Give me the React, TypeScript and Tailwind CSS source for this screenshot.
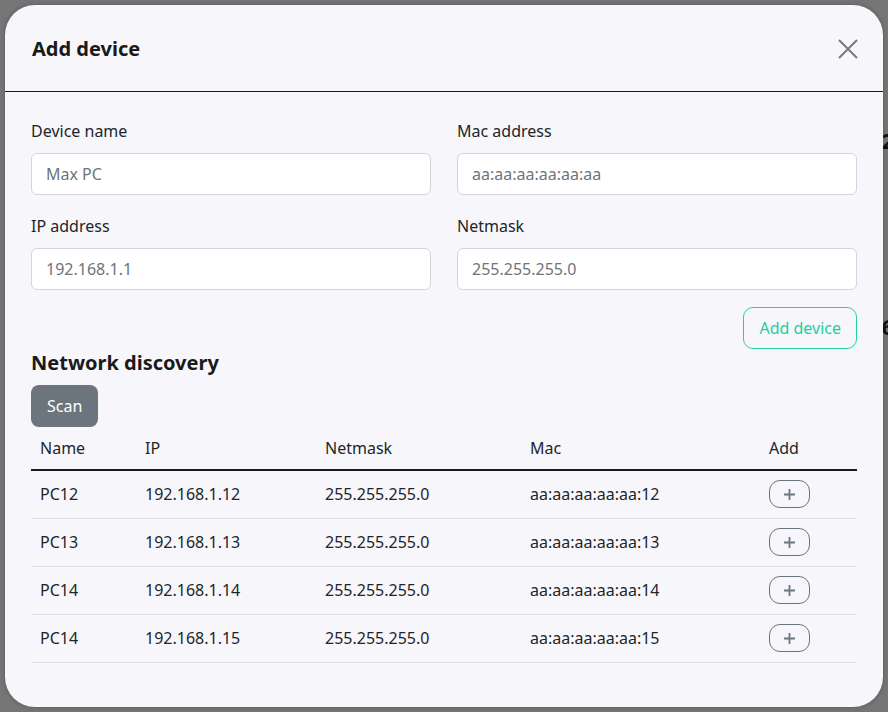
import React from 'react';

type Device = { name: string; ip: string; netmask: string; mac: string };

const DISCOVERED: Device[] = [
  { name: 'PC12', ip: '192.168.1.12', netmask: '255.255.255.0', mac: 'aa:aa:aa:aa:aa:12' },
  { name: 'PC13', ip: '192.168.1.13', netmask: '255.255.255.0', mac: 'aa:aa:aa:aa:aa:13' },
  { name: 'PC14', ip: '192.168.1.14', netmask: '255.255.255.0', mac: 'aa:aa:aa:aa:aa:14' },
  { name: 'PC14', ip: '192.168.1.15', netmask: '255.255.255.0', mac: 'aa:aa:aa:aa:aa:15' },
];

function Field({ label, placeholder }: { label: string; placeholder: string }) {
  return (
    <div className="flex flex-col">
      <label className="text-[16px] leading-6 text-[#212529] mb-[10px]">{label}</label>
      <input
        placeholder={placeholder}
        className="h-[42px] w-full rounded-[6px] border border-[#d4d6db] bg-white px-[14px] text-[16px] text-[#212529] placeholder:text-[#6c757d] outline-none"
      />
    </div>
  );
}

function PlusButton() {
  return (
    <button className="flex h-[28px] w-[41px] items-center justify-center rounded-[11px] border border-[#6c757d] bg-transparent">
      <svg width="13" height="13" viewBox="0 0 13 13" fill="none">
        <path d="M6.5 1v11M1 6.5h11" stroke="#6c757d" strokeWidth="1.8" />
      </svg>
    </button>
  );
}

export default function App() {
  return (
    <div
      className="relative flex h-[712px] w-full items-center justify-center overflow-hidden bg-[#777777]"
      style={{ fontFamily: '"Noto Sans", "Open Sans", sans-serif' }}
    >
      {/* dimmed page behind the dialog */}
      <div className="absolute right-[-6px] top-[124px] text-[22px] font-bold text-[#111]">2</div>
      <div className="absolute right-[-6px] top-[310px] text-[22px] font-bold text-[#111]">6</div>

      <div className="relative flex h-[702px] w-[878px] flex-col rounded-[30px] bg-[#f7f7fb] shadow-[0_0_6px_rgba(0,0,0,0.25)]">
        {/* Header */}
        <div className="flex h-[87px] items-center justify-between border-b border-[#1a1a1a] pl-[27px] pr-[24px] pt-[1px]">
          <h2 className="text-[20px] font-bold leading-7 text-[#1a1a1a]">Add device</h2>
          <button className="flex h-[22px] w-[22px] items-center justify-center">
            <svg width="20" height="20" viewBox="0 0 20 20" fill="none">
              <path d="M1 1l18 18M19 1L1 19" stroke="#7a7a7a" strokeWidth="2" />
            </svg>
          </button>
        </div>

        {/* Body */}
        <div className="flex flex-col px-[26px] pt-[27px]">
          <div className="grid grid-cols-2 gap-x-[26px] gap-y-[19px]">
            <Field label="Device name" placeholder="Max PC" />
            <Field label="Mac address" placeholder="aa:aa:aa:aa:aa:aa" />
            <Field label="IP address" placeholder="192.168.1.1" />
            <Field label="Netmask" placeholder="255.255.255.0" />
          </div>

          <div className="mt-[17px] flex justify-end">
            <button className="h-[42px] rounded-[10px] border border-[#22d3a0] px-[15px] text-[16px] text-[#1fcf9c]">
              Add device
            </button>
          </div>

          <h3 className="mt-0 text-[20px] font-bold leading-7 text-[#1a1a1a]">Network discovery</h3>

          <div className="mt-[8px]">
            <button className="h-[42px] rounded-[8px] bg-[#6c757d] px-[16px] text-[16px] text-white">Scan</button>
          </div>

          <table className="mt-[3px] w-full table-fixed border-collapse text-left text-[16px] text-[#212529]">
            <colgroup>
              <col className="w-[105px]" />
              <col className="w-[180px]" />
              <col className="w-[205px]" />
              <col className="w-[239px]" />
              <col className="w-[97px]" />
            </colgroup>
            <thead>
              <tr className="h-[40px] border-b-2 border-[#1a1a1a]">
                <th className="px-[9px] pb-[4px] font-normal">Name</th>
                <th className="px-[9px] pb-[4px] font-normal">IP</th>
                <th className="px-[9px] pb-[4px] font-normal">Netmask</th>
                <th className="px-[9px] pb-[4px] font-normal">Mac</th>
                <th className="px-[9px] pb-[4px] font-normal">Add</th>
              </tr>
            </thead>
            <tbody>
              {DISCOVERED.map((d, idx) => (
                <tr key={`${d.ip}-${idx}`} className="h-[48px] border-b border-[#e0e1e5]">
                  <td className="px-[9px]">{d.name}</td>
                  <td className="px-[9px]">{d.ip}</td>
                  <td className="px-[9px]">{d.netmask}</td>
                  <td className="px-[9px]">{d.mac}</td>
                  <td className="px-[9px]">
                    <PlusButton />
                  </td>
                </tr>
              ))}
            </tbody>
          </table>
        </div>
      </div>
    </div>
  );
}
